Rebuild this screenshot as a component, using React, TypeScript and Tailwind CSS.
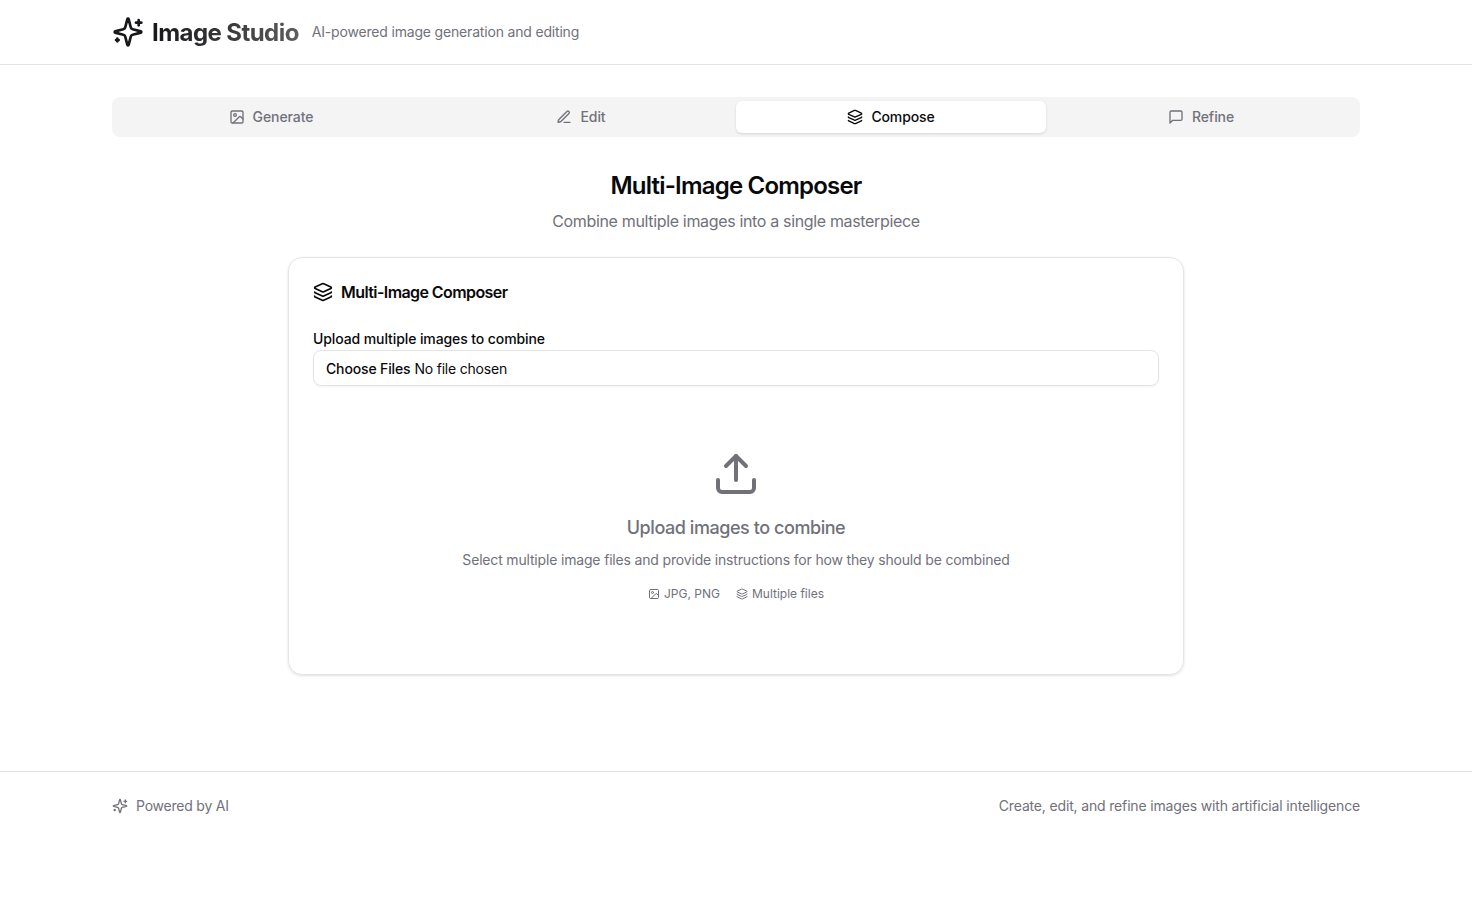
import React from "react";

type IconProps = { className?: string };

function Svg({ className, children }: IconProps & { children: React.ReactNode }) {
  return (
    <svg
      className={className}
      viewBox="0 0 24 24"
      fill="none"
      stroke="currentColor"
      strokeWidth="2"
      strokeLinecap="round"
      strokeLinejoin="round"
    >
      {children}
    </svg>
  );
}

const SparklesIcon = ({ className }: IconProps) => (
  <Svg className={className}>
    <path d="M9.937 15.5A2 2 0 0 0 8.5 14.063l-6.135-1.582a.5.5 0 0 1 0-.962L8.5 9.936A2 2 0 0 0 9.937 8.5l1.582-6.135a.5.5 0 0 1 .963 0L14.063 8.5A2 2 0 0 0 15.5 9.937l6.135 1.581a.5.5 0 0 1 0 .964L15.5 14.063a2 2 0 0 0-1.437 1.437l-1.582 6.135a.5.5 0 0 1-.963 0z" />
    <path d="M20 3v4" />
    <path d="M22 5h-4" />
    <path d="M4 17v2" />
    <path d="M5 18H3" />
  </Svg>
);

const ImageIcon = ({ className }: IconProps) => (
  <Svg className={className}>
    <rect width="18" height="18" x="3" y="3" rx="2" ry="2" />
    <circle cx="9" cy="9" r="2" />
    <path d="m21 15-3.086-3.086a2 2 0 0 0-2.828 0L6 21" />
  </Svg>
);

const PenLineIcon = ({ className }: IconProps) => (
  <Svg className={className}>
    <path d="M12 20h9" />
    <path d="M16.376 3.622a1 1 0 0 1 3.002 3.002L7.368 18.635a2 2 0 0 1-.855.506l-2.872.838a.5.5 0 0 1-.62-.62l.838-2.872a2 2 0 0 1 .506-.854z" />
  </Svg>
);

const LayersIcon = ({ className }: IconProps) => (
  <Svg className={className}>
    <path d="M12.83 2.18a2 2 0 0 0-1.66 0L2.6 6.08a1 1 0 0 0 0 1.83l8.58 3.91a2 2 0 0 0 1.66 0l8.58-3.9a1 1 0 0 0 0-1.83z" />
    <path d="M2 12a1 1 0 0 0 .58.91l8.6 3.91a2 2 0 0 0 1.65 0l8.58-3.9A1 1 0 0 0 22 12" />
    <path d="M2 17a1 1 0 0 0 .58.91l8.6 3.91a2 2 0 0 0 1.65 0l8.58-3.9A1 1 0 0 0 22 17" />
  </Svg>
);

const MessageIcon = ({ className }: IconProps) => (
  <Svg className={className}>
    <path d="M21 15a2 2 0 0 1-2 2H7l-4 4V5a2 2 0 0 1 2-2h14a2 2 0 0 1 2 2z" />
  </Svg>
);

const UploadIcon = ({ className }: IconProps) => (
  <Svg className={className}>
    <path d="M21 15v4a2 2 0 0 1-2 2H5a2 2 0 0 1-2-2v-4" />
    <path d="m17 8-5-5-5 5" />
    <path d="M12 3v12" />
  </Svg>
);

const tabs = [
  { label: "Generate", Icon: ImageIcon },
  { label: "Edit", Icon: PenLineIcon },
  { label: "Compose", Icon: LayersIcon },
  { label: "Refine", Icon: MessageIcon },
];

export default function App() {
  return (
    <div className="min-h-screen bg-white font-['Inter',sans-serif] text-[#09090b] antialiased">
      <header className="border-b border-[#e4e4e7]">
        <div className="mx-auto flex h-16 max-w-[1248px] items-center">
          <SparklesIcon className="mr-2 size-8 text-[#18181b]" />
          <h1 className="mr-[13px] bg-linear-to-r from-[#18181b] to-[#5d5d5f] bg-clip-text pt-0.5 text-2xl font-bold tracking-[-0.56px] text-transparent">
            Image Studio
          </h1>
          <span className="text-sm tracking-[-0.18px] text-[#71717a]">AI-powered image generation and editing</span>
        </div>
      </header>

      <main className="mx-auto max-w-[1248px] pt-8 pb-24">
        <div role="tablist" className="grid h-10 grid-cols-4 rounded-lg bg-[#f4f4f4] p-1">
          {tabs.map(({ label, Icon }) => (
            <button
              key={label}
              role="tab"
              aria-selected={label === "Compose"}
              className={
                label === "Compose"
                  ? "flex items-center justify-center gap-2 rounded-md bg-white text-sm font-medium tracking-[-0.12px] shadow-sm"
                  : "flex items-center justify-center gap-2 rounded-md text-sm font-medium tracking-[-0.08px] text-[#71717a]"
              }
            >
              <Icon className="size-4" />
              <span>{label}</span>
            </button>
          ))}
        </div>

        <div className="mt-[33px] text-center">
          <h2 className="text-2xl font-semibold tracking-[-0.8px]">Multi-Image Composer</h2>
          <p className="mt-[7px] text-base tracking-[-0.34px] text-[#71717a]">
            Combine multiple images into a single masterpiece
          </p>
        </div>

        <section className="mx-auto mt-6 h-[418px] w-[896px] rounded-[14px] border border-[#e4e4e7] p-6 shadow-sm">
          <h3 className="flex h-5 items-center gap-2 text-base font-semibold tracking-[-0.58px]">
            <LayersIcon className="size-5" />
            <span>Multi-Image Composer</span>
          </h3>
          <label className="mt-[30px] block h-[14px] text-sm leading-[14px] font-medium tracking-[-0.1px]">
            Upload multiple images to combine
          </label>
          <div className="mt-1 flex h-9 items-center gap-1 rounded-lg border border-[#e4e4e7] px-3 pt-0.5 text-sm shadow-xs">
            <span className="font-medium tracking-[-0.15px]">Choose Files</span>
            <span className="tracking-[-0.2px]">No file chosen</span>
          </div>
          <div className="mt-16 flex flex-col items-center text-[#71717a]">
            <UploadIcon className="size-12" />
            <p className="mt-4 text-lg font-medium tracking-[-0.44px]">Upload images to combine</p>
            <p className="mt-2 text-sm tracking-[-0.172px]">
              Select multiple image files and provide instructions for how they should be combined
            </p>
            <div className="mt-4 flex gap-4 text-xs">
              <span className="flex items-center gap-1">
                <ImageIcon className="size-3" />
                <span>JPG, PNG</span>
              </span>
              <span className="flex items-center gap-1">
                <LayersIcon className="size-3" />
                <span>Multiple files</span>
              </span>
            </div>
          </div>
        </section>
      </main>

      <footer className="border-t border-[#e4e4e7]">
        <div className="mx-auto flex max-w-[1248px] items-center justify-between py-6 text-sm text-[#71717a]">
          <div className="flex items-center gap-2">
            <SparklesIcon className="size-4" />
            <span className="tracking-[-0.22px]">Powered by AI</span>
          </div>
          <span className="tracking-[-0.16px]">Create, edit, and refine images with artificial intelligence</span>
        </div>
      </footer>
    </div>
  );
}
